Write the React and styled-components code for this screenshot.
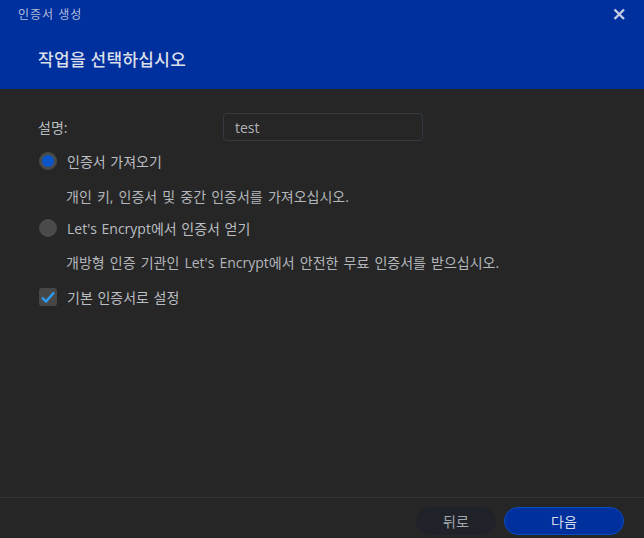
import React from 'react'
import styled, { createGlobalStyle } from 'styled-components'

const Global = createGlobalStyle`
  html, body { margin: 0; padding: 0; background: #262626; }
  body { font-family: "Open Sans", "Noto Sans CJK KR", sans-serif; }
`

const Dialog = styled.div`
  width: 644px;
  height: 538px;
  display: flex;
  flex-direction: column;
  background: #262626;
  color: #babdc1;
  font-size: 14px;
`
const Header = styled.div`
  background: #002f9e;
  height: 89px;
  box-sizing: border-box;
  padding: 4px 18px 0 18px;
  display: flex;
  flex-direction: column;
`
const TopRow = styled.div`
  display: flex;
  justify-content: space-between;
  align-items: center;
  height: 20px;
`
const SmallTitle = styled.div`
  font-size: 12px;
  letter-spacing: 1px;
  color: #b3bdd8;
`
const Close = styled.div`
  width: 14px;
  height: 14px;
  display: flex;
`
const Heading = styled.div`
  margin-top: 22px;
  padding-left: 20px;
  font-size: 17px;
  letter-spacing: 0.3px;
  font-weight: 500;
  color: #dbdfe9;
`
const Body = styled.div`
  flex: 1;
  padding: 24px 38px 0 38px;
  display: flex;
  flex-direction: column;
`
const FieldRow = styled.div`
  display: flex;
  align-items: center;
  height: 28px;
`
const Label = styled.div`
  width: 185px;
`
const Input = styled.input`
  width: 200px;
  height: 28px;
  box-sizing: border-box;
  background: #262626;
  border: 1px solid #333a41;
  border-radius: 4px;
  color: #aeb3ba;
  font-family: inherit;
  font-size: 14px;
  padding: 0 11px;
  outline: none;
`
const OptionRow = styled.div`
  display: flex;
  align-items: center;
  gap: 10px;
  height: 20px;
  word-spacing: 1px;
  margin-top: ${p => p.$top}px;
`
const Radio = styled.div`
  width: 18px;
  height: 18px;
  margin-left: 1px;
  border-radius: 50%;
  background: #4a4a4a;
  display: flex;
  align-items: center;
  justify-content: center;
  &::after {
    content: '';
    width: 12px;
    height: 12px;
    border-radius: 50%;
    background: ${p => (p.$on ? '#0a55c8' : 'transparent')};
  }
`
const Check = styled.div`
  width: 18px;
  height: 18px;
  margin-left: 1px;
  border-radius: 3px;
  background: #474747;
  display: flex;
  align-items: center;
  justify-content: center;
`
const Desc = styled.div`
  margin-top: ${p => p.$top}px;
  padding-left: 28px;
  height: 20px;
  line-height: 20px;
  word-spacing: 1.5px;
  color: #b3b6bb;
`
const Footer = styled.div`
  border-top: 1px solid #31363c;
  height: 41px;
  box-sizing: border-box;
  display: flex;
  justify-content: flex-end;
  align-items: flex-start;
  gap: 8px;
  padding: 9px 20px 0 0;
`
const Button = styled.button`
  height: 28px;
  width: ${p => p.$w}px;
  border-radius: 14px;
  font-family: inherit;
  font-size: 14px;
  padding: 0;
  border: 1px solid ${p => (p.$primary ? '#0a4cc4' : '#1f2329')};
  background: ${p => (p.$primary ? '#002f9e' : '#1f2329')};
  color: ${p => (p.$primary ? '#d6dcea' : '#a2a6ad')};
`

export default function App() {
  return (
    <>
      <Global />
      <Dialog>
        <Header>
          <TopRow>
            <SmallTitle>인증서 생성</SmallTitle>
            <Close>
              <svg width="14" height="14" viewBox="0 0 14 14">
                <path d="M2.5 2.5 L12 12 M12 2.5 L2.5 12" stroke="#c3cbe2" strokeWidth="2.4" />
              </svg>
            </Close>
          </TopRow>
          <Heading>작업을 선택하십시오</Heading>
        </Header>
        <Body>
          <FieldRow>
            <Label>설명:</Label>
            <Input defaultValue="test" />
          </FieldRow>
          <OptionRow $top={10}>
            <Radio $on />
            <span>인증서 가져오기</span>
          </OptionRow>
          <Desc $top={16}>개인 키, 인증서 및 중간 인증서를 가져오십시오.</Desc>
          <OptionRow $top={11}>
            <Radio />
            <span>Let's Encrypt에서 인증서 얻기</span>
          </OptionRow>
          <Desc $top={15}>개방형 인증 기관인 Let's Encrypt에서 안전한 무료 인증서를 받으십시오.</Desc>
          <OptionRow $top={14}>
            <Check>
              <svg width="16" height="16" viewBox="0 0 16 16">
                <path d="M2 8.5 L6 12.5 L14 3.5" fill="none" stroke="#2d9cf5" strokeWidth="2.4" />
              </svg>
            </Check>
            <span>기본 인증서로 설정</span>
          </OptionRow>
        </Body>
        <Footer>
          <Button $w={80}>뒤로</Button>
          <Button $w={120} $primary>다음</Button>
        </Footer>
      </Dialog>
    </>
  )
}
